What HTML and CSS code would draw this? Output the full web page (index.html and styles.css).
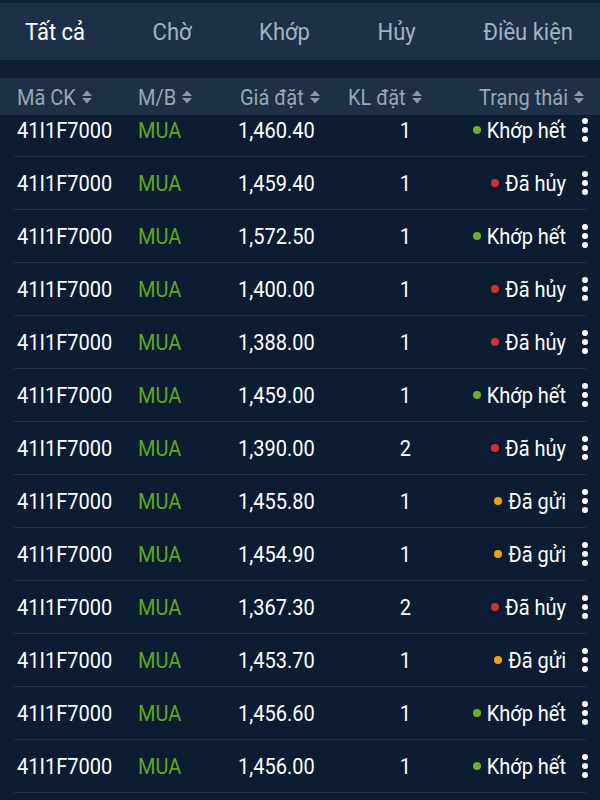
FILE: index.html
```html
<!DOCTYPE html>
<html lang="vi">
<head>
<meta charset="utf-8">
<link rel="stylesheet" href="styles.css">
</head>
<body>
<div class="topstrip"></div>
<nav class="tabs">
  <span class="tab active">Tất cả</span>
  <span class="tab">Chờ</span>
  <span class="tab">Khớp</span>
  <span class="tab">Hủy</span>
  <span class="tab">Điều kiện</span>
</nav>
<div class="gap"></div>
<div class="thead">
  <span class="h c1"><span class="t">Mã CK</span><svg class="sort" viewBox="0 0 12 16"><polygon points="1,7 6,1.5 11,7"/><polygon points="1,9 6,14.5 11,9"/></svg></span>
  <span class="h c2"><span class="t">M/B</span><svg class="sort" viewBox="0 0 12 16"><polygon points="1,7 6,1.5 11,7"/><polygon points="1,9 6,14.5 11,9"/></svg></span>
  <span class="h c3"><span class="t">Giá đặt</span><svg class="sort" viewBox="0 0 12 16"><polygon points="1,7 6,1.5 11,7"/><polygon points="1,9 6,14.5 11,9"/></svg></span>
  <span class="h c4h"><span class="t">KL đặt</span><svg class="sort" viewBox="0 0 12 16"><polygon points="1,7 6,1.5 11,7"/><polygon points="1,9 6,14.5 11,9"/></svg></span>
  <span class="h c5h"><span class="t">Trạng thái</span><svg class="sort" viewBox="0 0 12 16"><polygon points="1,7 6,1.5 11,7"/><polygon points="1,9 6,14.5 11,9"/></svg></span>
</div>
<div class="tbody">
  <div class="rows" id="rows"></div>
</div>
<script src="app.js"></script>
</body>
</html>
```
FILE: app.js
```js
const data = [
  ["1,460.40","1","ok"],
  ["1,459.40","1","cancel"],
  ["1,572.50","1","ok"],
  ["1,400.00","1","cancel"],
  ["1,388.00","1","cancel"],
  ["1,459.00","1","ok"],
  ["1,390.00","2","cancel"],
  ["1,455.80","1","sent"],
  ["1,454.90","1","sent"],
  ["1,367.30","2","cancel"],
  ["1,453.70","1","sent"],
  ["1,456.60","1","ok"],
  ["1,456.00","1","ok"]
];
const label = {ok:"Khớp hết", cancel:"Đã hủy", sent:"Đã gửi"};
const rows = document.getElementById("rows");
rows.innerHTML = data.map(([p,q,s]) => `
<div class="row">
  <span class="c1 t">41I1F7000</span>
  <span class="c2 t buy">MUA</span>
  <span class="c3 t">${p}</span>
  <span class="c4 t">${q}</span>
  <span class="c5"><i class="dot ${s}"></i><span class="t">${label[s]}</span></span>
  <span class="c6"><svg class="kebab" viewBox="0 0 8 26"><circle cx="4" cy="4" r="3"/><circle cx="4" cy="13" r="3"/><circle cx="4" cy="22" r="3"/></svg></span>
</div>`).join("");
```
FILE: styles.css
```css
html, body {
  margin: 0;
  padding: 0;
}
body {
  width: 600px;
  height: 800px;
  overflow: hidden;
  background: #0b1c33;
  font-family: Roboto, "Noto Sans", sans-serif;
  color: #ffffff;
}
.t {
  display: inline-block;
  transform: scaleY(1.1);
}
.topstrip {
  height: 3px;
  background: #0f1f35;
}
.tabs {
  height: 57px;
  background: #1d3048;
  display: flex;
  align-items: center;
  justify-content: space-between;
  padding: 0 27px 0 25px;
  font-size: 22px;
}
.tab {
  color: #a3b2c3;
  transform: scaleY(1.08);
}
.tab.active {
  color: #ffffff;
}
.gap {
  height: 18px;
  background: #0f1f35;
}
.thead {
  height: 37px;
  background: #1d3048;
  display: flex;
  align-items: center;
  padding: 0 15px 0 17px;
  font-size: 20px;
  color: #9aa6b4;
}
.h {
  display: flex;
  align-items: center;
  white-space: nowrap;
}
.sort {
  width: 12px;
  height: 16px;
  margin-left: 5px;
  fill: #8c97a4;
}
.thead .c1 { width: 121px; }
.thead .c2 { width: 102px; }
.thead .c3 { width: 108px; }
.thead .c4h { width: 90px; }
.thead .c5h { flex: 1; justify-content: flex-end; }

.tbody {
  height: 685px;
  overflow: hidden;
}
.rows {
  margin-top: -11px;
}
.row {
  height: 52px;
  margin: 0 14px;
  padding-left: 3px;
  border-bottom: 1px solid #1f344f;
  display: flex;
  align-items: center;
  font-size: 20px;
  white-space: nowrap;
}
.row .c1 { width: 121px; }
.row .c2 { width: 100px; }
.row .c3 { width: 110px; }
.row .c4 { width: 63px; text-align: right; }
.row .c5 {
  flex: 1;
  display: flex;
  align-items: center;
  justify-content: flex-end;
  padding-right: 4px;
}
.row .c6 {
  width: 30px;
  margin-right: -14px;
  display: flex;
  justify-content: center;
}
.buy { color: #5ea81f; }
.dot {
  width: 8px;
  height: 8px;
  border-radius: 50%;
  margin-right: 6px;
  display: inline-block;
}
.dot.ok { background: #68b22b; }
.dot.cancel { background: #d3312f; }
.dot.sent { background: #eda20f; }
.kebab {
  width: 8px;
  height: 26px;
  fill: #ffffff;
}
```
